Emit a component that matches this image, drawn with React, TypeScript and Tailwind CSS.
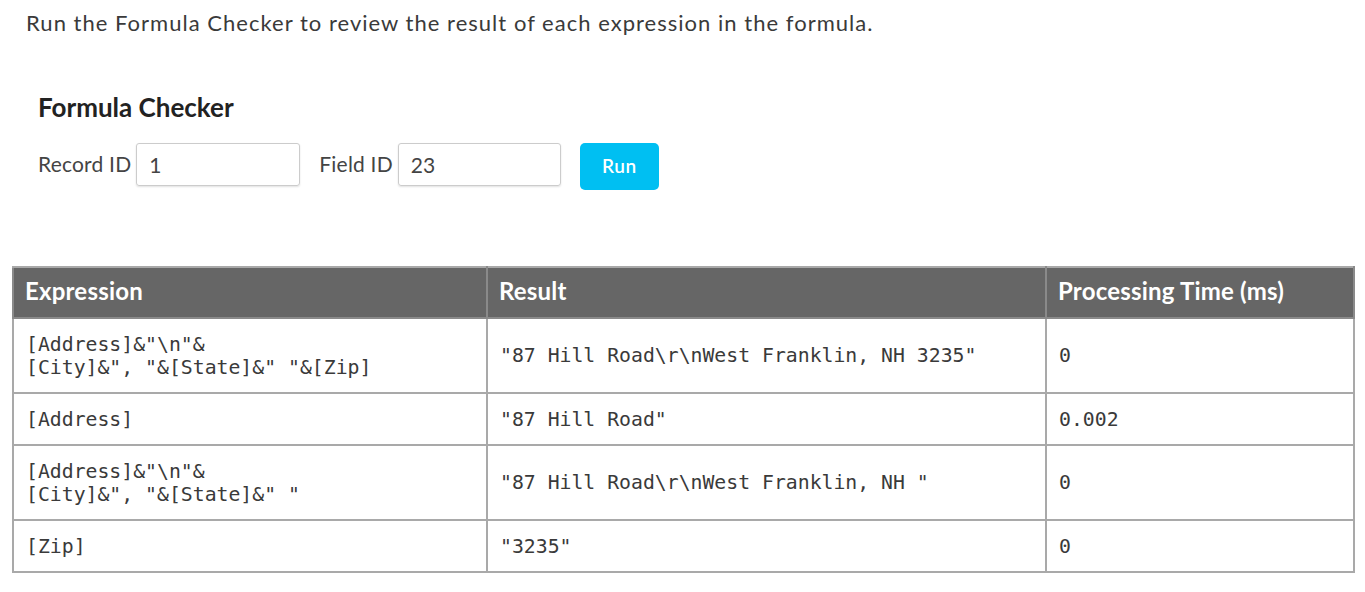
import React from "react";

const rows = [
  {
    expr: ['[Address]&"\\n"&', '[City]&", "&[State]&" "&[Zip]'],
    result: '"87 Hill Road\\r\\nWest Franklin, NH 3235"',
    time: "0",
  },
  { expr: ["[Address]"], result: '"87 Hill Road"', time: "0.002" },
  {
    expr: ['[Address]&"\\n"&', '[City]&", "&[State]&" "'],
    result: '"87 Hill Road\\r\\nWest Franklin, NH "',
    time: "0",
  },
  { expr: ["[Zip]"], result: '"3235"', time: "0" },
];

export default function App() {
  return (
    <div
      className="w-[1365px] h-[592px] bg-white text-[#333] overflow-hidden"
      style={{ fontFamily: "Lato, 'Open Sans', sans-serif" }}
    >
      <p className="pl-[26px] pt-[9px] text-[22px] leading-[28px] tracking-[1.02px] text-[#3a3a3a]">
        Run the Formula Checker to review the result of each expression in the formula.
      </p>
      <div className="pl-[38px] pt-[54px]">
        <h2 className="text-[26px] leading-[32px] font-bold tracking-[0px] text-[#222]">
          Formula Checker
        </h2>
        <div className="flex items-start mt-[20px]">
          <label className="text-[21px] leading-[42px] tracking-[0.2px] text-[#444]">Record ID</label>
          <div className="ml-[5px] w-[164px] h-[43px] border border-[#ccc] rounded-[3px] shadow-[0_1px_2px_rgba(0,0,0,0.12)] pl-[12px] text-[21px] leading-[41px] text-[#444]">
            1
          </div>
          <label className="ml-[19px] text-[21px] leading-[42px] tracking-[0.2px] text-[#444]">Field ID</label>
          <div className="ml-[5px] w-[163px] h-[43px] border border-[#ccc] rounded-[3px] shadow-[0_1px_2px_rgba(0,0,0,0.12)] pl-[12px] text-[21px] leading-[41px] text-[#444]">
            23
          </div>
          <button className="ml-[19px] w-[79px] h-[47px] rounded-[5px] bg-[#00bff2] text-white text-[19px] tracking-[0.5px] font-semibold">
            Run
          </button>
        </div>
      </div>
      <div className="pl-[12px] pt-[76px]">
        <table className="w-[1341px] border-collapse border-2 border-[#a9a9a9] table-fixed">
          <colgroup>
            <col className="w-[474px]" />
            <col className="w-[559px]" />
            <col className="w-[308px]" />
          </colgroup>
          <thead>
            <tr className="bg-[#666] h-[51px]">
              {["Expression", "Result", "Processing Time (ms)"].map((h) => (
                <th
                  key={h}
                  className="text-left text-white font-bold text-[24px] tracking-[0.2px] pl-[11px] pb-[3px] border-2 border-[#8a8a8a] border-t-[#a9a9a9] align-middle"
                >
                  {h}
                </th>
              ))}
            </tr>
          </thead>
          <tbody style={{ fontFamily: "'DejaVu Sans Mono', 'Liberation Mono', monospace" }}>
            {rows.map((r, i) => (
              <tr key={i} className="text-[19.8px] leading-[23px] text-[#3a3a3a]">
                <td className="border-2 border-[#a9a9a9] pl-[12px] py-[13.5px] align-middle">
                  {r.expr.map((l, j) => (
                    <div key={j} className="whitespace-pre">
                      {l}
                    </div>
                  ))}
                </td>
                <td className="border-2 border-[#a9a9a9] pl-[12px] py-[13.5px] align-middle whitespace-pre">
                  {r.result}
                </td>
                <td className="border-2 border-[#a9a9a9] pl-[12px] py-[13.5px] align-middle">
                  {r.time}
                </td>
              </tr>
            ))}
          </tbody>
        </table>
      </div>
    </div>
  );
}
